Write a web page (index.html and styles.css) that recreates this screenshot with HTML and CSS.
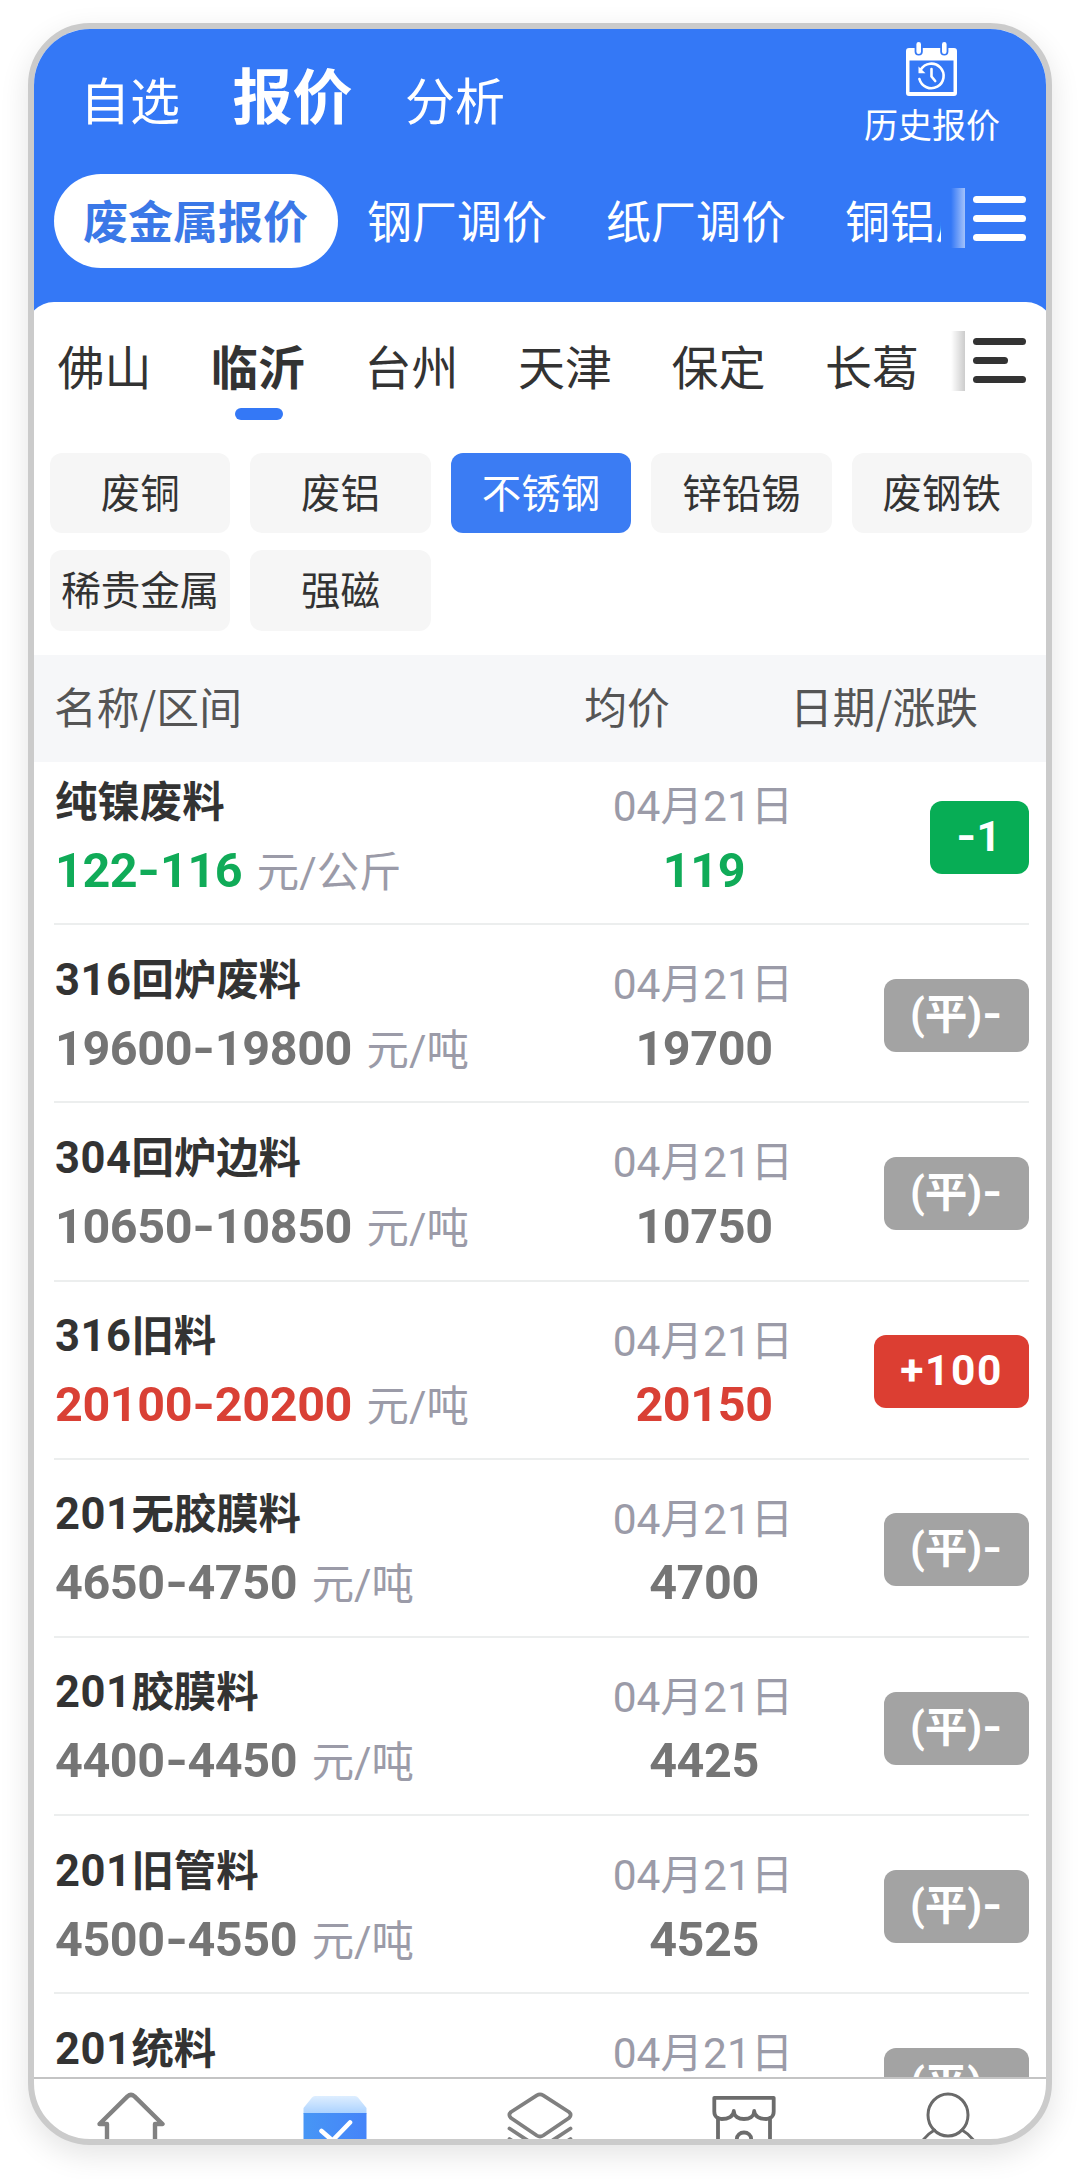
FILE: index.html
```html
<!DOCTYPE html>
<html lang="zh-CN">
<head>
<meta charset="utf-8">
<title>废金属报价</title>
<link rel="stylesheet" href="styles.css">
</head>
<body>
<div class="phone">
  <header class="header">
    <div class="topbar">
      <nav class="nav">
        <span class="nav-item">自选</span>
        <span class="nav-item nav-active">报价</span>
        <span class="nav-item">分析</span>
      </nav>
      <div class="history">
        <svg class="history-icon" width="51" height="54" viewBox="0 0 51 54" fill="none">
          <path fill="#fff" fill-rule="evenodd" d="M3 6h5.600v3.500a4 4 0 0 0 8.200 0V6h17.400v3.500a4 4 0 0 0 8.200 0V6H48a3 3 0 0 1 3 3v42a3 3 0 0 1-3 3H3a3 3 0 0 1-3-3V9a3 3 0 0 1 3-3zM3.500 18.500v31.500h44V18.500z"/>
          <path d="M12.700 2.300v7.400M38.300 2.300v7.400" stroke="#fff" stroke-width="4.600" stroke-linecap="round"/>
          <path d="M14.800 27.500a12.300 12.300 0 1 1-1.400 9.500" stroke="#fff" stroke-width="2.600" stroke-linecap="round"/>
          <path d="M12.500 24.500v6.800h7z" fill="#fff"/>
          <path d="M25.500 27v7.500l3.700 4.500" stroke="#fff" stroke-width="2.600" stroke-linecap="round" stroke-linejoin="round"/>
        </svg>
        <span class="history-label">历史报价</span>
      </div>
    </div>
    <div class="kinds">
      <div class="kinds-scroll">
        <span class="kind kind-active">废金属报价</span>
        <span class="kind">钢厂调价</span>
        <span class="kind">纸厂调价</span>
        <span class="kind">铜铝厂调价</span>
      </div>
      <i class="edge edge-light"></i>
      <div class="menu menu-light"><i></i><i></i><i></i></div>
    </div>
  </header>

  <section class="panel">
    <div class="cities">
      <div class="cities-scroll">
        <span class="city">佛山</span>
        <span class="city city-active">临沂</span>
        <span class="city">台州</span>
        <span class="city">天津</span>
        <span class="city">保定</span>
        <span class="city">长葛</span>
      </div>
      <i class="edge edge-dark"></i>
      <div class="menu menu-dark"><i></i><i class="short"></i><i></i></div>
    </div>
    <div class="chips">
      <span class="chip">废铜</span>
      <span class="chip">废铝</span>
      <span class="chip chip-active">不锈钢</span>
      <span class="chip">锌铅锡</span>
      <span class="chip">废钢铁</span>
      <span class="chip">稀贵金属</span>
      <span class="chip">强磁</span>
    </div>
  </section>

  <div class="table-head">
    <span class="th-name">名称/区间</span>
    <span class="th-avg">均价</span>
    <span class="th-date">日期/涨跌</span>
  </div>

  <main class="list">
    <article class="row down">
      <div class="item"><div class="title">纯镍废料</div><div class="range"><b>122<i>-</i>116</b><span class="unit">元/公斤</span></div></div>
      <div class="mid"><div class="date">04月21日</div><div class="avg">119</div></div>
      <div class="change"><span class="badge"><i>-</i>1</span></div>
    </article>
    <article class="row">
      <div class="item"><div class="title"><span class="num">316</span>回炉废料</div><div class="range"><b>19600<i>-</i>19800</b><span class="unit">元/吨</span></div></div>
      <div class="mid"><div class="date">04月21日</div><div class="avg">19700</div></div>
      <div class="change"><span class="badge">(平)<i>-</i></span></div>
    </article>
    <article class="row">
      <div class="item"><div class="title"><span class="num">304</span>回炉边料</div><div class="range"><b>10650<i>-</i>10850</b><span class="unit">元/吨</span></div></div>
      <div class="mid"><div class="date">04月21日</div><div class="avg">10750</div></div>
      <div class="change"><span class="badge">(平)<i>-</i></span></div>
    </article>
    <article class="row up">
      <div class="item"><div class="title"><span class="num">316</span>旧料</div><div class="range"><b>20100<i>-</i>20200</b><span class="unit">元/吨</span></div></div>
      <div class="mid"><div class="date">04月21日</div><div class="avg">20150</div></div>
      <div class="change"><span class="badge">+100</span></div>
    </article>
    <article class="row">
      <div class="item"><div class="title"><span class="num">201</span>无胶膜料</div><div class="range"><b>4650<i>-</i>4750</b><span class="unit">元/吨</span></div></div>
      <div class="mid"><div class="date">04月21日</div><div class="avg">4700</div></div>
      <div class="change"><span class="badge">(平)<i>-</i></span></div>
    </article>
    <article class="row">
      <div class="item"><div class="title"><span class="num">201</span>胶膜料</div><div class="range"><b>4400<i>-</i>4450</b><span class="unit">元/吨</span></div></div>
      <div class="mid"><div class="date">04月21日</div><div class="avg">4425</div></div>
      <div class="change"><span class="badge">(平)<i>-</i></span></div>
    </article>
    <article class="row">
      <div class="item"><div class="title"><span class="num">201</span>旧管料</div><div class="range"><b>4500<i>-</i>4550</b><span class="unit">元/吨</span></div></div>
      <div class="mid"><div class="date">04月21日</div><div class="avg">4525</div></div>
      <div class="change"><span class="badge">(平)<i>-</i></span></div>
    </article>
    <article class="row">
      <div class="item"><div class="title"><span class="num">201</span>统料</div></div>
      <div class="mid"><div class="date">04月21日</div></div>
      <div class="change"><span class="badge">(平)<i>-</i></span></div>
    </article>
  </main>

  <footer class="tabbar">
    <span class="tab">
      <svg width="72" height="60" viewBox="0 0 72 60" fill="none" stroke="#828282" stroke-width="4.400" stroke-linejoin="round" stroke-linecap="round">
        <path d="M12 60V45H4.500L32.500 17.400q3.500-3 7 0L67.500 45H60v15"/>
      </svg>
    </span>
    <span class="tab">
      <svg width="72" height="60" viewBox="0 0 72 60" fill="none">
        <defs>
          <linearGradient id="lid" x1="0" y1="0" x2="0" y2="1"><stop offset="0" stop-color="#deeeff"/><stop offset="1" stop-color="#a9d1ff"/></linearGradient>
          <linearGradient id="box" x1="0" y1="0" x2="1" y2="0"><stop offset="0" stop-color="#4796f5"/><stop offset="1" stop-color="#4584f9"/></linearGradient>
        </defs>
        <path d="M16 17h40q2 0 3 1.500L67.500 29v6h-63v-6L13 18.500q1-1.500 3-1.500z" fill="url(#lid)"/>
        <path d="M4.500 34h63v26h-63z" fill="url(#box)"/>
        <path d="M22.500 52l11 9.500L51 43.500" stroke="#fff" stroke-width="4.600" stroke-linecap="round" stroke-linejoin="round"/>
      </svg>
    </span>
    <span class="tab">
      <svg width="72" height="60" viewBox="0 0 72 60" fill="none" stroke="#808080" stroke-width="3.800" stroke-linejoin="round" stroke-linecap="round">
        <path d="M32.800 16.300q3.200-1.800 6.400 0L65 33q3.300 3 0 6L39.200 56.500q-3.200 2-6.400 0L7 39q-3.300-3 0-6z"/>
        <path d="M5.500 49.500L26 63M66.500 49.500L46 63"/>
        <path d="M5.500 60l6 4M66.500 60l-6 4"/>
      </svg>
    </span>
    <span class="tab">
      <svg width="72" height="60" viewBox="0 0 72 60" fill="none" stroke="#6c6c6c" stroke-width="3.800" stroke-linejoin="round" stroke-linecap="round">
        <path d="M6.300 18.800h59.400v13.700c0 5-3.500 7.500-7.500 7.500-6 0-12-2.500-12-8 0 5.500-5 8-10.200 8s-10.200-2.500-10.200-8c0 5.500-6 8-12 8-4 0-7.500-2.500-7.500-7.500z"/>
        <path d="M10 39v23M62 39v23M28.800 62v-2a7.200 6.500 0 0 1 14.400 0v2"/>
      </svg>
    </span>
    <span class="tab">
      <svg width="72" height="60" viewBox="0 0 72 60" fill="none" stroke="#6a6a6a" stroke-width="3" stroke-linecap="round">
        <ellipse cx="36" cy="36" rx="20" ry="21"/>
        <path d="M22.500 51Q15.500 55 10 62.500M50 51q7 4 12.500 11.500"/>
      </svg>
    </span>
  </footer>
</div>
</body>
</html>
```
FILE: styles.css
```css
* { box-sizing: border-box; }

body {
  min-height: 2179px;
  margin: 0;
  padding: 23px 28px 0;
  background: #fff;
  color: #333;
  font-family: "Noto Sans CJK SC", sans-serif;
  white-space: nowrap;
}

i { font-style: normal; }
svg { display: block; }

.phone {
  display: flex;
  flex-direction: column;
  height: 2122px;
  overflow: hidden;
  border: 6px solid #cbcbcb;
  border-radius: 62px;
  background: #fff;
  box-shadow: 0 10px 30px rgba(0, 0, 0, .11);
}

/* Blue header */
.header {
  flex: none;
  height: 290px;
  background: #3478f6;
  color: #fff;
}

.topbar {
  display: flex;
  justify-content: space-between;
  height: 145px;
  padding: 0 46px 0 46px;
}

.nav {
  display: flex;
  align-items: flex-end;
  gap: 52.500px;
  height: 99px;
}

.nav-item { font-size: 50px; line-height: 60px; }
.nav-active { font-size: 60px; font-weight: 700; line-height: 71px; }

.history {
  display: flex;
  flex-direction: column;
  align-items: center;
  padding-top: 13px;
}

.history-icon { margin-right: 2px; }
.history-label { margin-top: 8px; font-size: 34px; line-height: 40px; }

.kinds {
  display: flex;
  align-items: flex-start;
  height: 94px;
  padding-left: 20px;
}

.kinds-scroll { display: flex; width: 886.500px; overflow: hidden; }

.kind {
  flex: none;
  height: 94px;
  padding: 0 30px 0 29px;
  font-size: 45px;
  line-height: 91px;
}

.kind-active {
  border-radius: 47px;
  background: #fff;
  color: #3b78e7;
  font-weight: 700;
}

.edge { flex: none; width: 14px; height: 60px; }
.edge-light { margin: 14px 0 0 10px; background: linear-gradient(90deg, rgba(255, 255, 255, 0), rgba(255, 255, 255, .55)); }
.edge-dark { margin-left: auto; background: linear-gradient(90deg, rgba(0, 0, 0, 0), rgba(0, 0, 0, .2)); }

.menu {
  display: flex;
  flex: none;
  flex-direction: column;
  gap: 12px;
  width: 53px;
  margin-left: 8.500px;
}

.menu i { height: 7px; border-radius: 4px; background: currentColor; }
.menu .short { width: 35px; }
.menu-light { padding-top: 22px; }

/* City tabs and metal categories */
.panel {
  flex: none;
  height: 353px;
  margin: -17px -8px 0;
  padding: 0 22px 0 24px;
  border-radius: 28px 28px 0 0;
  background: #fff;
}

.cities {
  display: flex;
  align-items: flex-start;
  height: 150.500px;
  padding: 29px 6px 0 7.500px;
}

.cities-scroll { display: flex; gap: 59.500px; padding-top: 4px; }

.city {
  display: flex;
  flex-direction: column;
  align-items: center;
  width: 94px;
  font-size: 47px;
  line-height: 60px;
}

.city-active { font-weight: 700; }

.city-active::after {
  content: "";
  width: 48px;
  height: 12px;
  margin: 13px 0 0 2px;
  border-radius: 6px;
  background: #3478f6;
}

.menu-dark { padding-top: 7px; }

.chips {
  display: grid;
  grid-template-columns: repeat(5, 1fr);
  gap: 17px 20px;
}

.chip {
  height: 80.500px;
  border-radius: 12px;
  background: #f6f6f6;
  font-size: 39.500px;
  line-height: 76.500px;
  text-align: center;
}

.chip-active { background: #3b7cf3; color: #fff; }

/* Price table */
.table-head {
  display: flex;
  flex: none;
  align-items: center;
  justify-content: space-between;
  height: 107px;
  padding: 0 68px 8px 20px;
  background: #f6f7f9;
  color: #555;
  font-size: 42.800px;
}

.th-avg { margin-left: 222px; }

.list {
  flex: 1;
  min-height: 0;
  overflow: hidden;
  padding: 0 17px 0 20px;
  font-family: Roboto, "Noto Sans CJK SC", sans-serif;
}

.row {
  display: grid;
  grid-template-columns: 1fr 200px 226px;
  height: 178.200px;
  border-bottom: 2px solid #eceeee;
  color: #757575;
}

.row:first-child { margin-top: -15px; }
.row.down { color: #10ab58; }
.row.up { color: #d94035; }

.item { padding: 23.500px 0 0 1px; }

.title {
  color: #333;
  font-size: 42.400px;
  font-weight: 700;
  line-height: 64px;
}

.num { font-size: 43.500px; letter-spacing: .5px; }

.range {
  margin-top: 4px;
  font-size: 48.500px;
  line-height: 64px;
}

.range b { letter-spacing: -.4px; }
.range i { display: inline-block; padding: 0 2px; line-height: 1; transform: scaleX(1.2); }

.unit {
  margin-left: 14.500px;
  color: #9b9ba8;
  font-size: 42.400px;
}

.mid { padding-top: 31px; text-align: center; }
.date { color: #9b9ba8; font-size: 42.500px; line-height: 58px; }
.avg { margin: 5.500px 0 0 2px; font-size: 48.500px; font-weight: 700; letter-spacing: -.4px; line-height: 58px; }

.change {
  display: flex;
  align-items: center;
  justify-content: flex-end;
  padding-top: 4px;
}

.badge {
  height: 73px;
  padding: 0 26px;
  border-radius: 12px;
  background: #a3a3a3;
  color: #fff;
  font-size: 42.500px;
  font-weight: 700;
  line-height: 72px;
}

.badge i { display: inline-block; padding: 0 2px; line-height: 1; transform: scaleX(1.2); }
.down .badge { padding: 0 28px 0 26px; background: #07ad55; }
.up .badge { background: #dc3e32; letter-spacing: 1.600px; }

/* Bottom navigation */
.tabbar {
  display: flex;
  flex: none;
  height: 62px;
  margin: 0 -4.500px 0 -5px;
  border-top: 2px solid #c4c4c4;
}

.tab { display: flex; flex: 1; justify-content: center; }
```
